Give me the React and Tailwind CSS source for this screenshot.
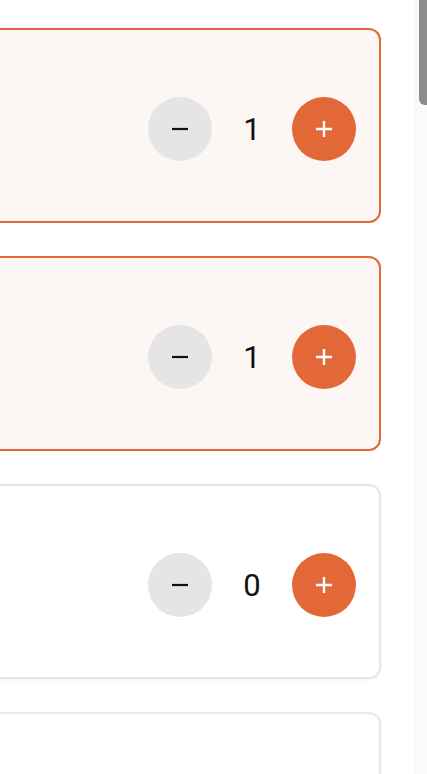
import { useState } from 'react';

// ── Qty stepper ──────────────────────────────────────────────
function Stepper({ value, onChange }) {
  return (
    <div className="flex items-center">
      <button
        type="button"
        onClick={() => onChange(Math.max(0, value - 1))}
        className="w-16 h-16 rounded-full bg-[#e5e5e5] flex items-center justify-center"
      >
        <svg width="18" height="18" viewBox="0 0 18 18">
          <path d="M1 9h16" stroke="#111" strokeWidth="2.2" />
        </svg>
      </button>
      <span
        className="w-20 text-center text-[31px] leading-none text-[#111]"
        style={{ fontFamily: 'Roboto, "Liberation Sans", sans-serif' }}
      >
        {value}
      </span>
      <button
        type="button"
        onClick={() => onChange(value + 1)}
        className="w-16 h-16 rounded-full bg-[#e36838] flex items-center justify-center"
      >
        <svg width="18" height="18" viewBox="0 0 18 18">
          <path d="M1 9h16M9 1v16" stroke="#fff" strokeWidth="2.4" />
        </svg>
      </button>
    </div>
  );
}

// ── Item card ────────────────────────────────────────────────
function ItemCard({ qty, onChange, children }) {
  const active = qty > 0;
  return (
    <div
      className={`h-[195px] shrink-0 rounded-xl border-2 flex justify-end items-start pt-[67px] pr-[23px] ${
        active
          ? 'border-[#e36838] bg-[#fcf6f4]'
          : 'border-[#e8e8e8] bg-white shadow-[0_1px_3px_rgba(0,0,0,0.06)]'
      }`}
    >
      {children ?? <Stepper value={qty} onChange={onChange} />}
    </div>
  );
}

export default function App() {
  const [items, setItems] = useState([1, 1, 0]);

  const setQty = (i, v) => setItems((prev) => prev.map((q, j) => (j === i ? v : q)));

  return (
    <div className="w-[427px] h-[774px] overflow-hidden bg-white flex">
      {/* list */}
      <div className="flex-1 pt-[28px] pr-[32px] -ml-[40px] flex flex-col gap-[33px]">
        {items.map((q, i) => (
          <ItemCard key={i} qty={q} onChange={(v) => setQty(i, v)} />
        ))}
        {/* next card, scrolled below the fold */}
        <ItemCard qty={0}>
          <div />
        </ItemCard>
      </div>

      {/* scrollbar */}
      <div className="w-[14px] shrink-0 bg-[#fafafa] flex flex-col items-end">
        <div className="w-[8px] h-[105px] bg-[#8c8c8c] rounded-bl-[6px]" />
      </div>
    </div>
  );
}
